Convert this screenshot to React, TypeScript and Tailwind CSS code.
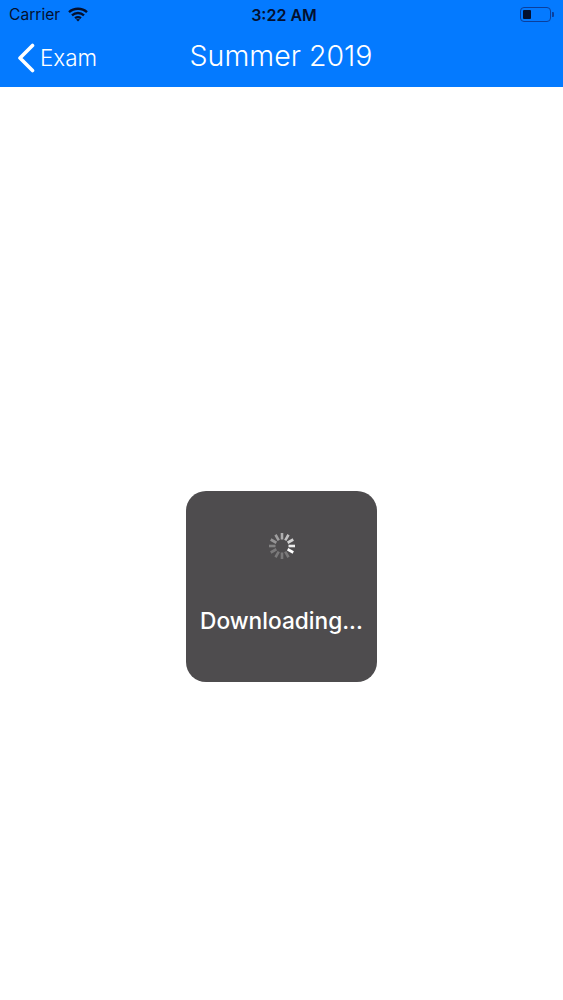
const SPOKES = [
  { angle: 0, opacity: 0.55 },
  { angle: 30, opacity: 0.65 },
  { angle: 60, opacity: 0.75 },
  { angle: 90, opacity: 0.9 },
  { angle: 120, opacity: 1 },
  { angle: 150, opacity: 0.25 },
  { angle: 180, opacity: 0.25 },
  { angle: 210, opacity: 0.25 },
  { angle: 240, opacity: 0.25 },
  { angle: 270, opacity: 0.3 },
  { angle: 300, opacity: 0.4 },
  { angle: 330, opacity: 0.45 },
];

function Spinner() {
  return (
    <svg width="28" height="28" viewBox="0 0 28 28" className="block">
      {SPOKES.map((s) => (
        <line
          key={s.angle}
          x1="14"
          y1="1"
          x2="14"
          y2="7.5"
          stroke="#ffffff"
          strokeWidth="2.6"
          opacity={s.opacity}
          transform={`rotate(${s.angle} 14 14)`}
        />
      ))}
    </svg>
  );
}

function WifiIcon() {
  return (
    <svg width="20" height="15" viewBox="0 0 20 15" fill="none" stroke="#04102e" strokeLinecap="butt">
      <path d="M1 5.2C6 .6 14 .6 19 5.2" strokeWidth="2.4" />
      <path d="M4 8.3c3.4-3 8.6-3 12 0" strokeWidth="2.4" />
      <path d="M7 11.2c1.8-1.4 4.2-1.4 6 0" strokeWidth="2.2" />
      <path d="M10 14.6l-2-2.2c1.2-.7 2.800-.7 4 0z" fill="#04102e" stroke="none" />
    </svg>
  );
}

function Battery() {
  return (
    <div className="flex items-center gap-[1px]">
      <div className="w-[31px] h-[15px] rounded-[4px] border border-[#0b3f9c] p-[2px]">
        <div className="h-full w-[8px] rounded-[1px] bg-[#04102e]" />
      </div>
      <div className="w-[2px] h-[5px] rounded-r-[1px] bg-[#0b3f9c]" />
    </div>
  );
}

function BackChevron() {
  return (
    <svg width="18" height="30" viewBox="0 0 18 30" fill="none" stroke="#ffffff" strokeWidth="3.6" strokeLinecap="round" strokeLinejoin="round">
      <path d="M15.500 2.500L3 15l12.500 12.500" />
    </svg>
  );
}

export default function App() {
  return (
    <div className="w-[563px] h-[1000px] bg-white font-['Inter','Liberation_Sans',sans-serif] overflow-hidden">
      <header className="h-[87px] bg-[#047aff] flex flex-col">
        <div className="h-[29px] grid grid-cols-[1fr_auto_1fr] items-center pl-[9px] pr-[9px] text-[#04102e]">
          <div className="flex items-center gap-[8px] text-[15.600px] leading-none">
            <span>Carrier</span>
            <WifiIcon />
          </div>
          <div className="text-center text-[16px] font-semibold leading-none whitespace-nowrap pl-[5px]">3:22 AM</div>
          <div className="flex justify-end">
            <Battery />
          </div>
        </div>
        <div className="grid grid-cols-[1fr_auto_1fr] items-center text-white pl-[17px] pb-[4px] flex-1">
          <div className="flex items-center gap-[5px] pt-[3px]">
            <BackChevron />
            <span className="text-[22.400px] font-light leading-[30px]">Exam</span>
          </div>
          <h1 className="text-[28.500px] font-light leading-none -translate-x-[9px]">Summer 2019</h1>
          <div />
        </div>
      </header>
      <main className="flex justify-center pt-[404px]">
        <div className="w-[191px] h-[191px] rounded-[20px] bg-[#4e4c4e] flex flex-col items-center pt-[41px]">
          <Spinner />
          <div className="mt-[50px] text-[22.700px] font-medium leading-none text-white whitespace-nowrap">Downloading...</div>
        </div>
      </main>
    </div>
  );
}
